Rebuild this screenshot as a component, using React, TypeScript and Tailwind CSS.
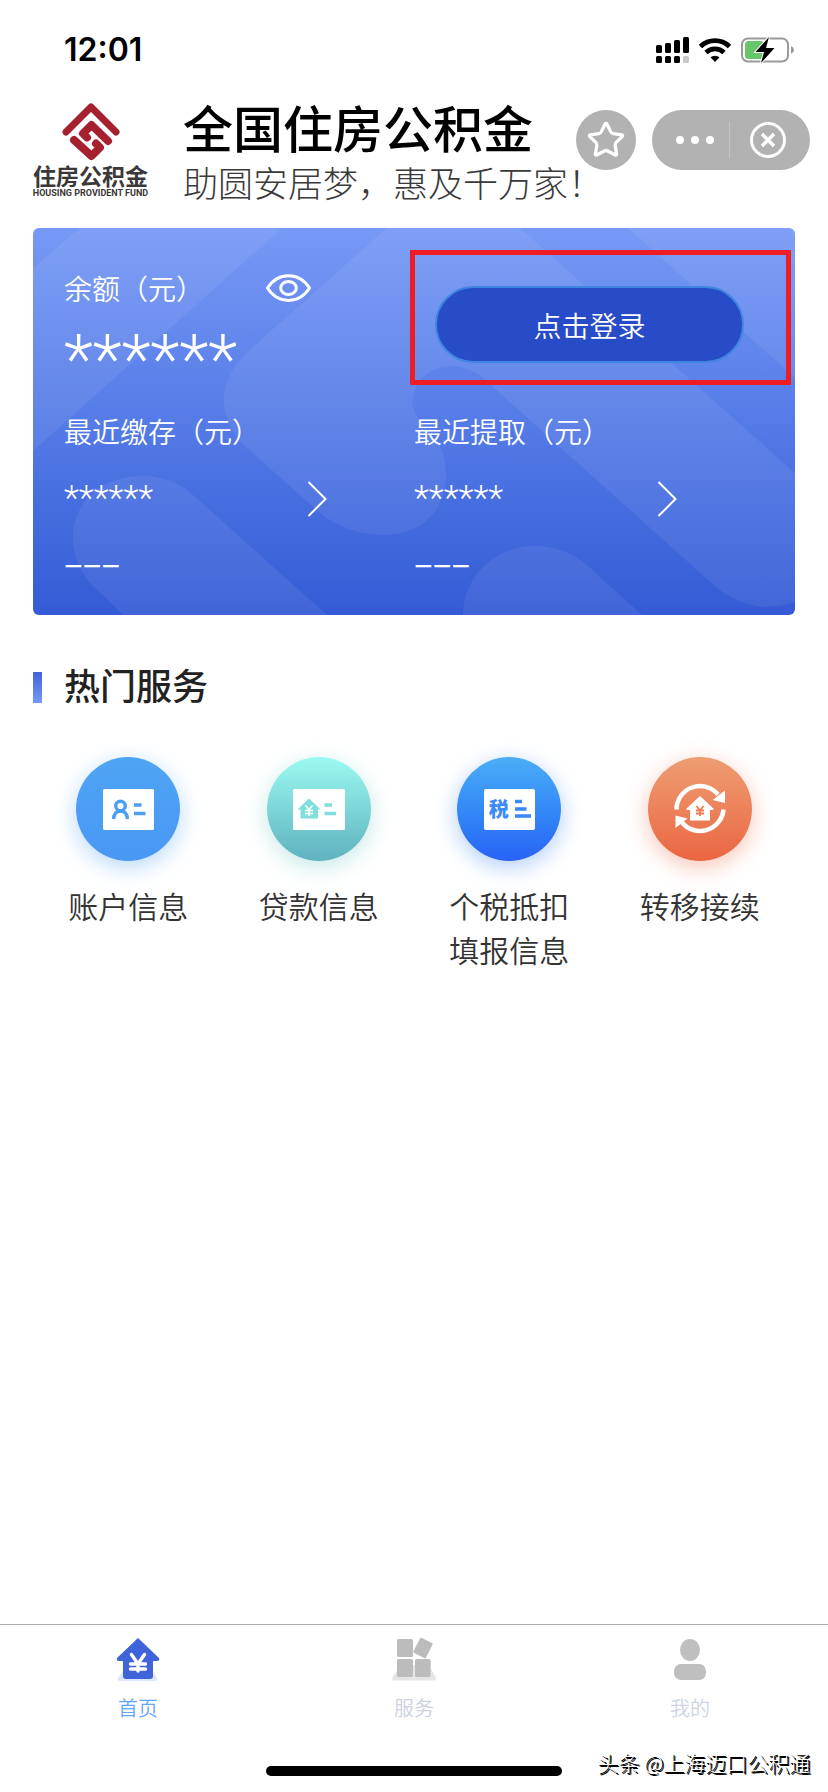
import { Star } from 'lucide-react'
import type { ReactNode } from 'react'

interface AccountRecord {
  label: string
  amount: string
  date: string
}

interface Service {
  lines: string[]
  circle: string
  icon: ReactNode
}

interface Tab {
  label: string
  color: string
  icon: ReactNode
}

const records: AccountRecord[] = [
  { label: '最近缴存（元）', amount: '******', date: '–––' },
  { label: '最近提取（元）', amount: '******', date: '–––' },
]

const HOUSE = 'M22 1 L43 21 Q44 24 41 24 H37 V39 Q37 42 34 42 H10 Q7 42 7 39 V24 H3 Q0 24 1 21 Z'

function AccountIcon() {
  return (
    <svg className="w-[51px] h-[41px]" viewBox="0 0 51 41" fill="none">
      <rect width="51" height="41" rx="1.5" fill="#fff" />
      <circle cx="17.5" cy="17" r="4.8" stroke="#4b9ff5" strokeWidth="3.4" />
      <path d="M10.5 30c.5-5.500 3-8 7-8s6.500 2.500 7 8" stroke="#4b9ff5" strokeWidth="3.400" />
      <path d="M31 16h7.500M31 24.500h11.500" stroke="#4b9ff5" strokeWidth="3.600" />
    </svg>
  )
}

function LoanIcon() {
  return (
    <svg className="w-[52px] h-[41px]" viewBox="0 0 52 41" fill="none">
      <rect width="52" height="41" rx="1.5" fill="#fff" />
      <path d="M16 9.500 27.500 20.500H25V29.500H7.500V20.500H4.500Z" fill="#80dedb" />
      <path d="M12.500 16.500l3.500 4 3.500-4M16 20.500v6.500M12 21.500h8M12 24.500h8" stroke="#fff" strokeWidth="1.600" />
      <path d="M31.500 16h7.500M31.500 24.500H43" stroke="#80dedb" strokeWidth="3.600" />
    </svg>
  )
}

function TaxIcon() {
  return (
    <span className="flex w-[51px] h-[41px] items-center rounded-[2px] bg-white pl-[5px] text-xl font-black text-[#3a8bf7]">
      税
      <svg className="ml-[6px] h-5 w-4" viewBox="0 0 16 20">
        <path d="M0 2.500h7M0 10h11.500M0 17h16" stroke="#3a87f7" strokeWidth="3.600" />
      </svg>
    </span>
  )
}

function TransferIcon() {
  return (
    <svg className="w-[52px] h-[52px]" viewBox="0 0 52 52" fill="none">
      <path d="M2.500 26.500A23.500 23.500 0 0 1 44 11.500" stroke="#fff" strokeWidth="4.500" />
      <path d="M49.500 26.500A23.500 23.500 0 0 1 8 39.500" stroke="#fff" strokeWidth="4.500" />
      <path d="M51 7.500V20L38.500 17Z" fill="#fff" />
      <path d="M1.500 45V32.500L13.500 35.500Z" fill="#fff" />
      <path d="M26 13 39.500 25.500Q40 27 38 27H36V37.500H16V27H14Q12 27 12.500 25.500Z" fill="#fff" />
      <path d="M22.500 23l3.500 4.500 3.500-4.500M26 27v6M22 27.500h8M22 30.500h8" stroke="#ee7a52" strokeWidth="1.800" />
    </svg>
  )
}

const services: Service[] = [
  {
    lines: ['账户信息'],
    circle: 'bg-linear-to-b from-[#4ea4f4] to-[#4998f4] shadow-[0_6px_22px_rgba(75,159,245,0.4)]',
    icon: <AccountIcon />,
  },
  {
    lines: ['贷款信息'],
    circle: 'bg-linear-to-b from-[#9bfaf1] to-[#5fb2be] shadow-[0_6px_22px_rgba(95,190,190,0.35)]',
    icon: <LoanIcon />,
  },
  {
    lines: ['个税抵扣', '填报信息'],
    circle: 'bg-linear-to-b from-[#4badf6] to-[#2962f6] shadow-[0_6px_22px_rgba(60,130,245,0.4)]',
    icon: <TaxIcon />,
  },
  {
    lines: ['转移接续'],
    circle: 'bg-linear-to-b from-[#ee9d72] to-[#ea6542] shadow-[0_6px_22px_rgba(238,110,75,0.4)]',
    icon: <TransferIcon />,
  },
]

const tabs: Tab[] = [
  {
    label: '首页',
    color: 'text-[#64a6f8]',
    icon: (
      <svg className="w-11 h-11" viewBox="0 0 44 44" fill="none">
        <path d="M7 34 2 41Q1 44 4 44H39Q42 44 41 41L36 34Z" fill="#dbe7fd" />
        <path d={HOUSE} fill="#3f63d8" />
        <path d="M15.500 17.500 22 27l6.500-9.500M22 27v7M14.500 27h15M14.500 32h15" stroke="#fff" strokeWidth="3.400" strokeLinecap="round" />
      </svg>
    ),
  },
  {
    label: '服务',
    color: 'text-[#cbd1e2]',
    icon: (
      <svg className="w-11 h-11" viewBox="0 0 44 44">
        <path d="M6 32 0 41Q0 43.500 2 43.500H42Q44 43.500 44 41L39 32V25H34Z" fill="#e6e6e6" />
        <g fill="#bcbcbc">
          <rect x="5" y="2" width="16" height="18" rx="1.5" />
          <rect x="5" y="22" width="16" height="18" rx="1.5" />
          <rect x="23" y="22" width="15.500" height="18" rx="1.5" />
          <rect x="24" y="2.500" width="14" height="17" rx="1.5" transform="rotate(27 31 11)" />
        </g>
      </svg>
    ),
  },
  {
    label: '我的',
    color: 'text-[#ccd5e6]',
    icon: (
      <svg className="w-11 h-11" viewBox="0 0 44 44" fill="#bfbfbf">
        <ellipse cx="22" cy="13" rx="10" ry="11" />
        <rect x="6" y="27" width="32" height="16" rx="7" />
      </svg>
    ),
  },
]

function StatusBar() {
  return (
    <div className="flex h-[100px] items-center justify-between pl-16 pr-[34px] font-['Inter','Liberation_Sans',sans-serif]">
      <span className="text-[32px] font-semibold text-black">12:01</span>
      <div className="flex items-center gap-[10px]">
        <svg className="h-[26px] w-[33px]" viewBox="0 0 33 26">
          <rect x="0" y="8" width="6" height="8" rx="1.500" />
          <rect x="9" y="6" width="6" height="10" rx="1.500" />
          <rect x="18" y="3" width="6" height="13" rx="1.500" />
          <rect x="27" y="0" width="6" height="16" rx="1.500" />
          <rect x="0" y="19" width="6" height="7" rx="1.500" />
          <rect x="9" y="19" width="6" height="7" rx="1.500" />
          <rect x="18" y="19" width="6" height="7" rx="1.500" />
          <rect x="27" y="19" width="6" height="7" rx="1.500" fill="#c9c9c9" />
        </svg>
        <svg className="h-6 w-8" viewBox="0 0 32 24" fill="none" stroke="#000">
          <path d="M1.500 8.500a21 21 0 0 1 29 0" strokeWidth="4.800" />
          <path d="M7 14.500a13 13 0 0 1 18 0" strokeWidth="4.800" />
          <path d="M16 24l-4.500-4.700a7 7 0 0 1 9 0Z" fill="#000" stroke="none" />
        </svg>
        <svg className="h-[26px] w-[53px]" viewBox="0 0 53 26" fill="none">
          <rect x="1" y="1.500" width="46" height="23" rx="6" stroke="#9a9a9a" strokeWidth="2" />
          <rect x="4" y="4" width="19" height="18" rx="3.500" fill="#68c56a" />
          <path d="M50 9v8q3-1.500 3-4t-3-4Z" fill="#9a9a9a" />
          <path d="M28 0 14.500 15h8.500l-3 11L33.500 11H25Z" fill="#000" stroke="#fff" strokeWidth="2" paintOrder="stroke" />
        </svg>
      </div>
    </div>
  )
}

function Logo() {
  return (
    <div className="mt-[3px] flex w-[117px] flex-col items-center">
      <svg className="h-[58px] w-[58px]" viewBox="0 0 58 58" fill="none" stroke="#a62130" strokeLinecap="round" strokeLinejoin="round">
        <path d="M4 29 29 4 54 29" strokeWidth="7" />
        <path d="M46 38 29.500 22 21 30.500 25 34.500" strokeWidth="8" />
        <path d="M12 37 29.500 53 38 44.500 34 40.500" strokeWidth="8" />
      </svg>
      <span className="mt-[2px] text-[23px] leading-6 font-bold whitespace-nowrap text-[#3b3837]">住房公积金</span>
      <span className="font-['Roboto',sans-serif] text-[9px] leading-[12px] font-bold whitespace-nowrap text-[#3b3837]">
        HOUSING PROVIDENT FUND
      </span>
    </div>
  )
}

function Header() {
  return (
    <header className="flex items-start pl-8 pr-[18px]">
      <Logo />
      <div className="ml-[34px] w-[392px] whitespace-nowrap">
        <h1 className="text-[50px] leading-[52px] font-medium text-black">全国住房公积金</h1>
        <p className="text-[35px] leading-[60px] font-light text-[#3a3a3a]">助圆安居梦，惠及千万家！</p>
      </div>
      <div className="-ml-1 mt-[10px] flex flex-1 justify-end gap-4">
        <button aria-label="收藏" className="flex h-[60px] w-[60px] items-center justify-center rounded-full bg-[#b2b2b2] text-white">
          <Star className="h-10 w-10" strokeWidth={2} />
        </button>
        <div className="flex h-[60px] w-[158px] items-center rounded-full bg-[#b2b2b2]">
          <button aria-label="更多" className="flex h-9 flex-1 items-center justify-center gap-[7px] border-r border-[#c4c4c4] pl-2">
            <i className="h-2 w-2 rounded-full bg-white" />
            <i className="h-2 w-2 rounded-full bg-white" />
            <i className="h-2 w-2 rounded-full bg-white" />
          </button>
          <button aria-label="关闭" className="flex w-20 items-center justify-center pr-1">
            <svg className="h-9 w-9" viewBox="0 0 36 36" fill="none" stroke="#fff">
              <circle cx="18" cy="18" r="16.500" strokeWidth="3" />
              <path d="m12 12 12 12M24 12 12 24" strokeWidth="3.400" />
            </svg>
          </button>
        </div>
      </div>
    </header>
  )
}

function BalanceCard() {
  return (
    <section className="relative mx-[33px] mt-4 h-[387px] overflow-hidden rounded-md bg-linear-to-b from-[#7799f6] via-[#587ee8] via-45% to-[#345bd5] text-white">
      <svg className="absolute inset-0 h-full w-full" viewBox="0 0 762 387" preserveAspectRatio="none" fill="#fff" fillOpacity="0.065">
        <path d="M0 40 47 0H249L0 223Z" />
        <path d="M354 0 220 119C182 150 182 190 214 220L287 285C330 320 413 318 413 244C413 225 405 212 390 197C365 170 390 138 417 138Q436 138 450 150L684 360Q720 388 762 374V245L487 0Z" />
        <path d="M595 0 762 150V0Z" />
        <path d="M90 387 57 355C20 310 45 248 110 248Q138 248 160 267L294 387Z" />
        <path d="M430 387C430 348 462 318 502 318Q530 318 554 337L609 387Z" />
      </svg>

      <div className="relative grid h-full grid-cols-[350px_1fr] grid-rows-[183px_1fr] pl-[31px] text-[28px] leading-[40px] font-[350]">
        <div className="pt-10">
          <div className="flex items-center">
            <span className="w-[202px]">余额（元）</span>
            <button aria-label="显示余额">
              <svg className="h-7 w-[45px]" viewBox="0 0 45 28" fill="none" stroke="#fff" strokeWidth="3">
                <path d="M1.500 14C12-2.500 33-2.500 43.500 14 33 30.500 12 30.500 1.500 14Z" strokeLinejoin="round" />
                <ellipse cx="22.500" cy="14" rx="7.800" ry="6.500" />
              </svg>
            </button>
          </div>
          <div className="mt-3 font-['Roboto',sans-serif] text-[68px] leading-[80px] font-light">******</div>
        </div>

        <div className="relative pt-[58px] pl-[21px]">
          <button className="h-[77px] w-[309px] rounded-full border-2 border-[#3f86e0] bg-[#284bc8]">点击登录</button>
          {/* Highlight frame over the login button */}
          <div className="pointer-events-none absolute top-[22px] -left-1 h-[135px] w-[381px] border-[5px] border-[#ee1c25]" />
        </div>

        {records.map((r) => (
          <div key={r.label}>
            <div>{r.label}</div>
            <div className="mt-7 flex h-10 items-center">
              <span className="w-[243px] font-['Roboto',sans-serif] text-[35px] font-light">{r.amount}</span>
              <button aria-label={r.label}>
                <svg className="h-9 w-5" viewBox="0 0 20 36" fill="none" stroke="#fff" strokeWidth="2">
                  <path d="M1.500 1 18.500 18 1.500 35" />
                </svg>
              </button>
            </div>
            <div className="mt-[22px] text-[35px] font-normal">{r.date}</div>
          </div>
        ))}
      </div>
    </section>
  )
}

export default function App() {
  return (
    <div className="flex min-h-screen flex-col bg-white font-['Noto_Sans_CJK_SC',sans-serif]">
      <StatusBar />
      <Header />
      <BalanceCard />

      {/* Popular services */}
      <main className="mx-[33px] mt-[43px]">
        <h2 className="flex items-center gap-[22px] text-[36px] leading-[52px] font-medium text-[#222]">
          <i className="mt-1.5 h-[31px] w-[9px] bg-linear-to-b from-[#4064d8] to-[#7698f4]" />
          热门服务
        </h2>
        <div className="mt-[47px] grid grid-cols-4">
          {services.map((s) => (
            <button key={s.lines[0]} className="flex flex-col items-center text-[30px] leading-[44px] font-[350] text-[#333]">
              <span className={`mb-[22px] flex h-[104px] w-[104px] items-center justify-center rounded-full ${s.circle}`}>{s.icon}</span>
              {s.lines.map((line) => (
                <span key={line}>{line}</span>
              ))}
            </button>
          ))}
        </div>
      </main>

      <nav className="mt-auto grid h-[142px] grid-cols-3 items-start border-t border-[#adadad] pt-3">
        {tabs.map((t) => (
          <button key={t.label} className={`flex flex-col items-center text-xl leading-[30px] font-[350] ${t.color}`}>
            <span className="mb-3">{t.icon}</span>
            {t.label}
          </button>
        ))}
      </nav>
      <footer className="relative flex h-[26px] justify-center">
        <div className="h-[10px] w-[296px] rounded-full bg-black" />
        <span className="absolute right-[18px] bottom-[14px] text-[21px] leading-[32px] font-light whitespace-nowrap text-white [text-shadow:1px_1px_0_#000,2px_2px_0_#000]">
          头条 @上海迈口公积通
        </span>
      </footer>
    </div>
  )
}
